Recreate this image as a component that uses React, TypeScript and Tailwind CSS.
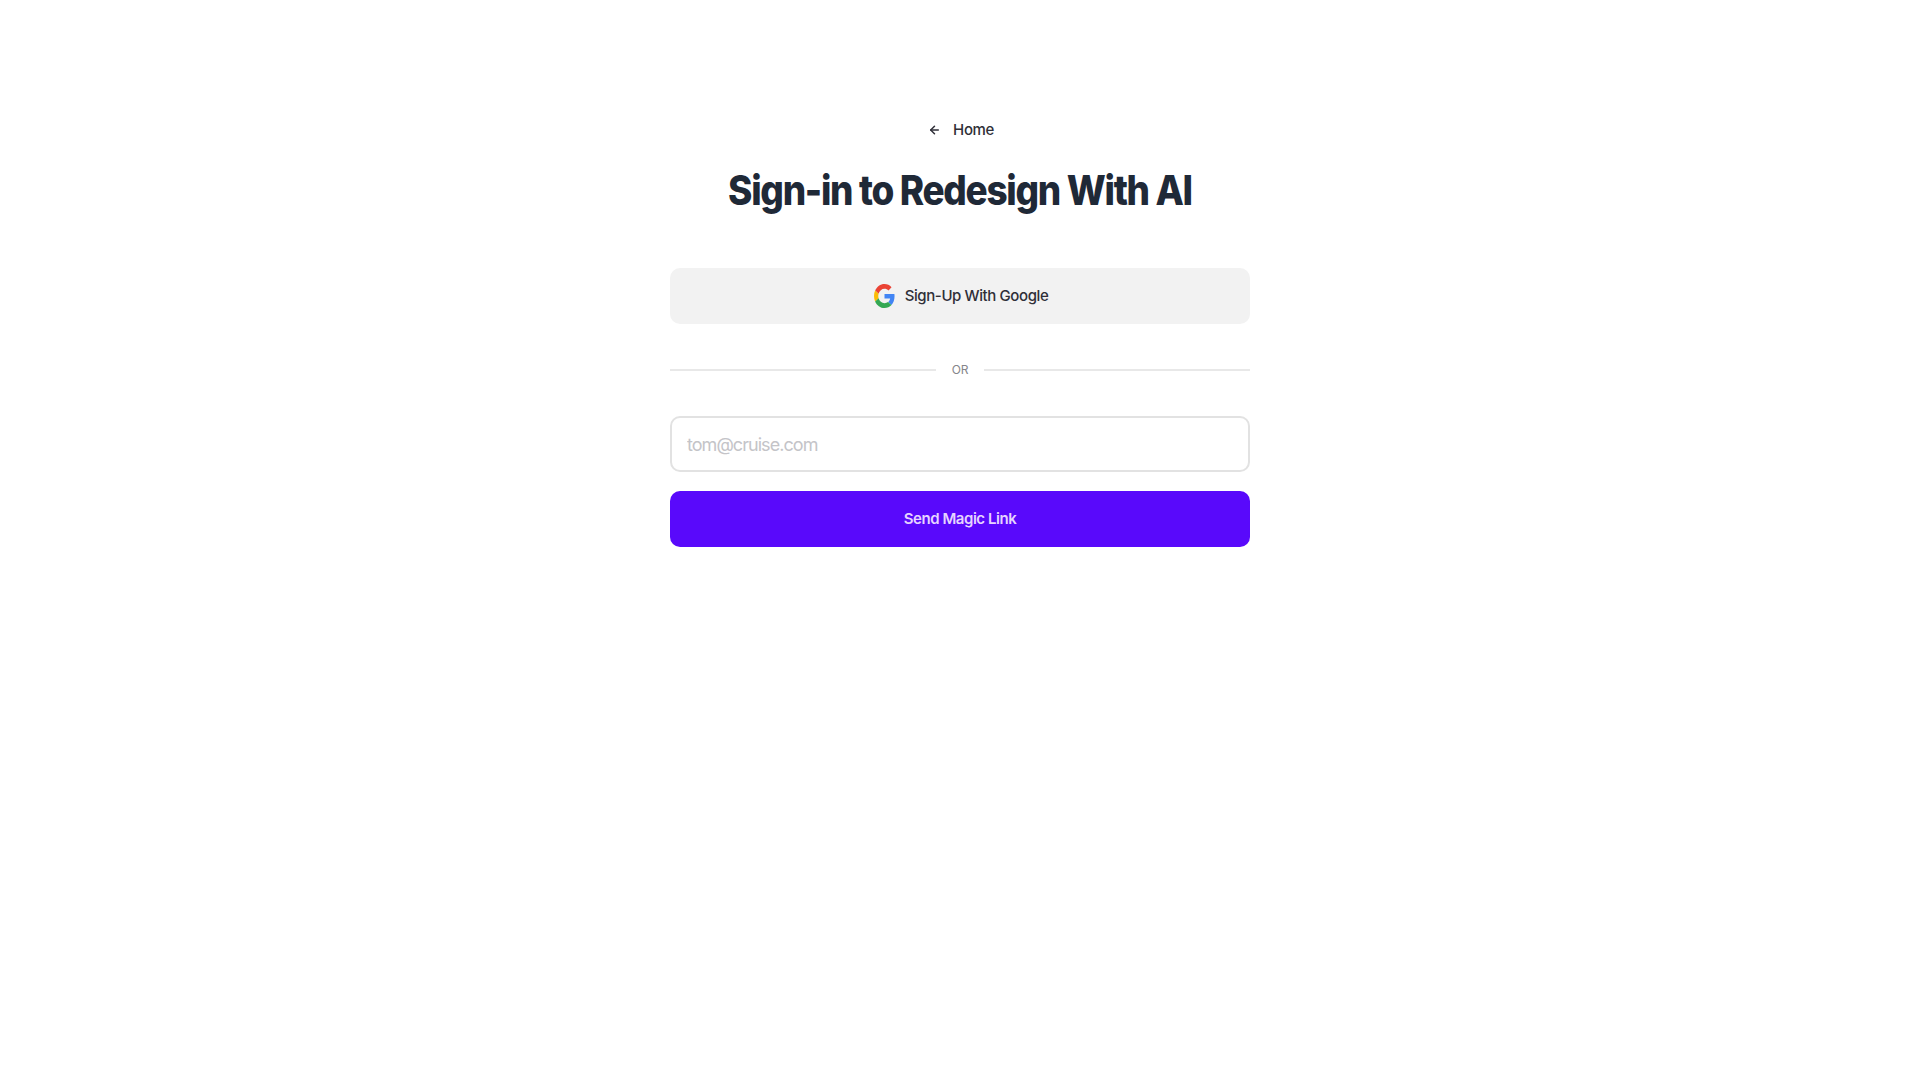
import { ArrowLeft } from "lucide-react";

const GoogleIcon = () => (
  <svg viewBox="0 0 48 48" className="w-[21px] h-6 shrink-0" preserveAspectRatio="none">
    <path fill="#EA4335" d="M24 9.5c3.54 0 6.71 1.22 9.21 3.6l6.85-6.85C35.9 2.38 30.47 0 24 0 14.62 0 6.51 5.38 2.56 13.22l7.98 6.19C12.43 13.72 17.74 9.5 24 9.5z" />
    <path fill="#4285F4" d="M46.98 24.55c0-1.57-.15-3.09-.38-4.55H24v9.02h12.94c-.58 2.96-2.26 5.48-4.78 7.18l7.73 6c4.51-4.18 7.09-10.36 7.09-17.65z" />
    <path fill="#FBBC05" d="M10.53 28.59c-.48-1.45-.76-2.99-.76-4.59s.27-3.14.76-4.59l-7.98-6.19C.92 16.46 0 20.12 0 24c0 3.88.92 7.54 2.56 10.78l7.97-6.19z" />
    <path fill="#34A853" d="M24 48c6.48 0 11.93-2.13 15.89-5.81l-7.73-6c-2.15 1.45-4.92 2.3-8.16 2.3-6.26 0-11.57-4.22-13.47-9.91l-7.98 6.19C6.51 42.62 14.62 48 24 48z" />
  </svg>
);

export default function App() {
  return (
    <div className="min-h-screen bg-white font-['Inter',sans-serif]">
      <div className="mx-auto w-[580px] pt-[118px] flex flex-col">
        <a className="flex items-center justify-center gap-3 h-6 text-[15px] tracking-[-0.4px] font-medium text-[#2f2f38] pl-[2px]">
          <ArrowLeft className="w-[13px] h-[14px]" strokeWidth={2.75} />
          <span>Home</span>
        </a>
        <h1 className="mt-6 text-center text-[41px] leading-[48px] font-extrabold tracking-[-0.035em] text-[#1f2937] scale-x-[0.9]">
          Sign-in to Redesign With AI
        </h1>
        <button className="mt-[54px] h-14 rounded-[10px] bg-[#f2f2f2] flex items-center justify-center gap-[10px] pl-[2px] text-[15px] leading-[24px] tracking-[-0.4px] font-medium text-[#2f2f38]">
          <GoogleIcon />
          <span>Sign-Up With Google</span>
        </button>
        <div className="mt-[38px] flex items-center gap-4">
          <div className="flex-1 h-[2px] bg-[#e8e8e8]" />
          <span className="text-xs leading-4 tracking-[-0.1px] text-[#85858a]">OR</span>
          <div className="flex-1 h-[2px] bg-[#e8e8e8]" />
        </div>
        <input
          placeholder="tom@cruise.com"
          className="mt-[38px] h-14 rounded-[10px] border-2 border-[#e2e2e2] bg-white px-[15px] text-lg tracking-[-0.95px] text-[#27272f] outline-none placeholder:text-[#c4c4c8]"
        />
        <button className="mt-[19px] h-14 rounded-[10px] bg-[#5909fb] text-[15px] tracking-[-0.45px] font-semibold text-[#e6d4ff]">
          Send Magic Link
        </button>
      </div>
    </div>
  );
}
